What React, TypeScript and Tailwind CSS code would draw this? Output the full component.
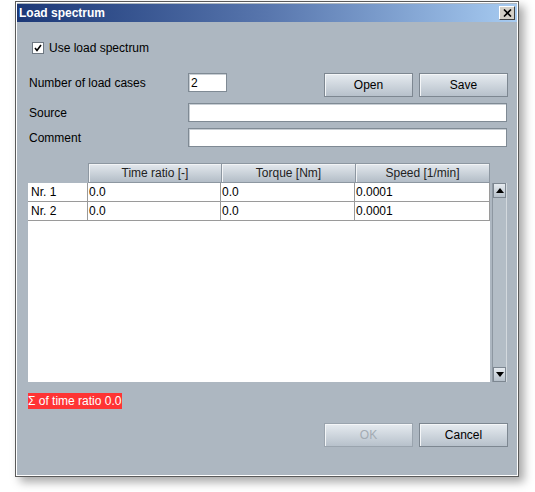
import React from "react";

const font = { fontFamily: '"Liberation Sans", Arial, sans-serif' };

function Btn({ label, disabled, w = "w-[89px]" }: { label: string; disabled?: boolean; w?: string }) {
  return (
    <div
      className={`${w} h-[24px] border border-[#7d8791] bg-gradient-to-b from-[#e6ebf0] to-[#b7c1cb] shadow-[inset_1px_1px_0_#f4f6f8] flex items-center justify-center text-[12px] ${
        disabled ? "text-[#a3abb3] border-[#9aa4ae]" : "text-black"
      }`}
    >
      {label}
    </div>
  );
}

function Input({ value, w }: { value?: string; w: string }) {
  return (
    <div className={`${w} h-[19px] bg-white border border-[#7f8a94] shadow-[inset_1px_1px_0_#c8ced4] flex items-center pl-[2px] text-[12px] text-black`}>
      {value}
    </div>
  );
}

export default function App() {
  const rows = [
    ["Nr. 1", "0.0", "0.0", "0.0001"],
    ["Nr. 2", "0.0", "0.0", "0.0001"],
  ];
  return (
    <div className="w-[535px] h-[492px] bg-white relative overflow-hidden" style={font}>
      <div className="absolute left-[15px] top-[1px] w-[504px] h-[476px] border border-[#5a5a5a] shadow-[5px_5px_9px_rgba(0,0,0,0.35)] bg-white p-[1px]">
        <div className="w-full h-full bg-[#adb7c1] flex flex-col">
          {/* title bar */}
          <div className="h-[18px] mt-[1px] mx-[0px] bg-gradient-to-r from-[#1c3877] via-[#5876ad] to-[#a7cbf1] flex items-center justify-between pl-[2px] pr-[2px]">
            <span className="text-white font-bold text-[12px] leading-none">Load spectrum</span>
            <div className="w-[16px] h-[14px] bg-[#d4d0c8] border border-t-white border-l-white border-r-[#404040] border-b-[#404040] flex items-center justify-center">
              <svg width="9" height="8" viewBox="0 0 9 8">
                <path d="M1 0.5 L8 7.5 M8 0.5 L1 7.5" stroke="#000" strokeWidth="1.6" />
              </svg>
            </div>
          </div>

          <div className="flex flex-col pl-[11px] pr-[9px]">
            {/* checkbox */}
            <div className="mt-[20px] h-[12px] flex items-center ml-[4px]">
              <div className="w-[12px] h-[12px] bg-white border border-[#6e7882] flex items-center justify-center">
                <svg width="8" height="8" viewBox="0 0 8 8">
                  <path d="M1 4 L3 6.5 L7 1" stroke="#000" strokeWidth="1.6" fill="none" />
                </svg>
              </div>
              <span className="ml-[5px] text-[12px] text-black">Use load spectrum</span>
            </div>

            {/* number row */}
            <div className="mt-[19px] h-[24px] flex items-start">
              <div className="w-[160px] h-[19px] pl-[1px] flex items-center text-[12px] text-black">Number of load cases</div>
              <Input value="2" w="w-[39px]" />
              <div className="ml-auto flex gap-[6px]">
                <Btn label="Open" />
                <Btn label="Save" />
              </div>
            </div>

            <div className="mt-[6px] h-[19px] flex items-center">
              <div className="w-[160px] pl-[1px] text-[12px] text-black">Source</div>
              <Input w="w-[319px]" />
            </div>
            <div className="mt-[6px] h-[19px] flex items-center">
              <div className="w-[160px] pl-[1px] text-[12px] text-black">Comment</div>
              <Input w="w-[319px]" />
            </div>

            {/* table */}
            <div className="mt-[16px] flex">
              <div className="w-[462px] flex flex-col">
                <div className="h-[20px] flex">
                  <div className="w-[60px]" />
                  {["Time ratio [-]", "Torque [Nm]", "Speed [1/min]"].map((h, i) => (
                    <div
                      key={h}
                      className={`${i === 0 ? "w-[133px]" : i === 1 ? "w-[134px]" : "w-[135px]"} h-[20px] border border-[#8d97a1] border-r-0 last:border-r bg-gradient-to-b from-[#e4e9ee] to-[#b3bdc7] shadow-[inset_1px_1px_0_#f2f4f6] flex items-center justify-center text-[12px] text-[#222]`}
                    >
                      {h}
                    </div>
                  ))}
                </div>
                <div className="h-[199px] bg-white">
                  {rows.map((r, ri) => (
                    <div key={ri} className="h-[19px] flex border-b border-[#9a9a9a]">
                      {r.map((c, ci) => (
                        <div
                          key={ci}
                          className={`${ci === 0 ? "w-[60px] pl-[3px]" : ci === 1 ? "w-[133px] pl-[1px]" : ci === 2 ? "w-[134px] pl-[1px]" : "w-[135px] pl-[1px]"} h-full flex items-center text-[12px] text-black border-r border-[#9a9a9a]`}
                        >
                          {c}
                        </div>
                      ))}
                    </div>
                  ))}
                </div>
              </div>
              {/* scrollbar */}
              <div className="ml-[2px] mt-[20px] w-[15px] h-[199px] flex flex-col bg-[#b3bdc6] border-l border-[#8d97a1] border-r border-r-[#d3d9de]">
                <div className="h-[15px] border border-[#7d8791] bg-gradient-to-b from-[#e6ebf0] to-[#b7c1cb] flex items-center justify-center">
                  <svg width="8" height="5" viewBox="0 0 8 5"><path d="M0 5 L4 0 L8 5 Z" fill="#000" /></svg>
                </div>
                <div className="flex-1" />
                <div className="h-[15px] border border-[#7d8791] bg-gradient-to-b from-[#e6ebf0] to-[#b7c1cb] flex items-center justify-center">
                  <svg width="8" height="5" viewBox="0 0 8 5"><path d="M0 0 L8 0 L4 5 Z" fill="#000" /></svg>
                </div>
              </div>
            </div>

            {/* sum label */}
            <div className="mt-[11px] h-[16px] w-[94px] bg-[#ff3434] text-white text-[12px] flex items-center">
              Σ of time ratio 0.0
            </div>

            <div className="mt-[14px] flex justify-end gap-[6px]">
              <Btn label="OK" disabled />
              <Btn label="Cancel" />
            </div>
          </div>
        </div>
      </div>
    </div>
  );
}
